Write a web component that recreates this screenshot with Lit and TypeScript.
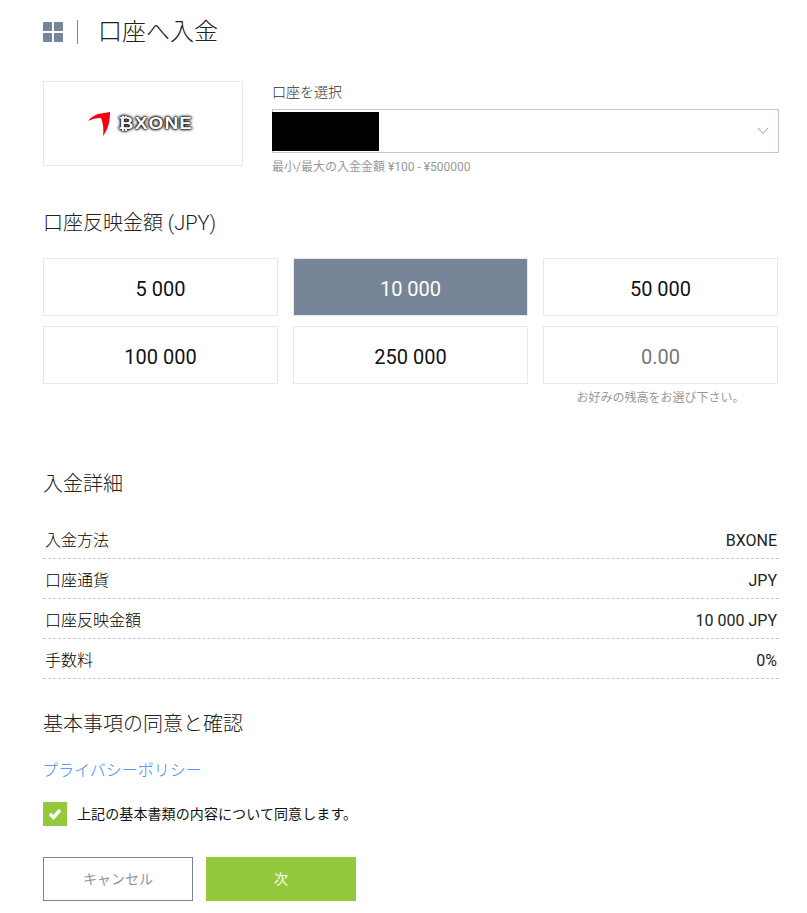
import { LitElement, html, css } from 'lit';
import { customElement } from 'lit/decorators.js';

const AMOUNTS = ['5 000', '10 000', '50 000', '100 000', '250 000'];
const DETAILS = [
  ['入金方法', 'BXONE'],
  ['口座通貨', 'JPY'],
  ['口座反映金額', '10 000 JPY'],
  ['手数料', '0%'],
];

@customElement('app-root')
export class AppRoot extends LitElement {
  static styles = css`
    :host {
      display: block;
      width: 807px;
      height: 913px;
      box-sizing: border-box;
      padding: 0 28px 0 43px;
      background: #fff;
      color: #222;
      font-family: Roboto, "Noto Sans CJK JP", sans-serif;
      font-weight: 300;
      overflow: hidden;
    }
    .title {
      display: flex;
      align-items: center;
      height: 64px;
    }
    .title h1 {
      margin: 0;
      font-size: 24px;
      font-weight: 300;
      line-height: 30px;
    }
    .grid-icon {
      display: block;
      width: 20px;
      height: 20px;
    }
    .divider {
      width: 1px;
      height: 24px;
      background: #76859a;
      margin: 0 20px 0 14px;
    }
    .account {
      display: flex;
      margin-top: 17px;
    }
    .logo {
      box-sizing: border-box;
      width: 200px;
      height: 85px;
      border: 1px solid #e8e8e8;
      display: flex;
      align-items: center;
      justify-content: center;
      gap: 7px;
    }
    .logo-text {
      display: inline-block;
      font-family: "Liberation Sans", sans-serif;
      font-weight: 700;
      font-size: 17px;
      letter-spacing: 1px;
      color: #fff;
      text-shadow: 0 0 1px #000, 0 0 2px #000, 0 0 3px #000, 0 0 3px #000;
      transform: scaleX(1.12);
      transform-origin: left center;
      margin-right: 13px;
    }
    .picker {
      width: 507px;
      margin-left: 29px;
    }
    .picker label {
      display: block;
      font-size: 14px;
      line-height: 20px;
      margin-top: 1px;
      color: #333;
      font-weight: 300;
    }
    .select {
      box-sizing: border-box;
      height: 44px;
      margin-top: 7px;
      border: 1px solid #bfc9d6;
      display: flex;
      align-items: center;
      justify-content: space-between;
      padding-right: 9px;
    }
    .redacted {
      width: 107px;
      height: 39px;
      margin-left: -1px;
      background: #000;
    }
    .hint {
      font-size: 12px;
      line-height: 16px;
      margin-top: 6px;
      color: #999;
      font-weight: 400;
    }
    h2 {
      margin: 0;
      font-size: 20px;
      font-weight: 300;
      line-height: 24px;
    }
    .amount-title {
      margin-top: 36px;
    }
    .amounts {
      display: grid;
      grid-template-columns: repeat(3, 235px);
      grid-auto-rows: 58px;
      column-gap: 15px;
      row-gap: 10px;
      margin-top: 23px;
    }
    .amount {
      box-sizing: border-box;
      border: 1px solid #e8e8e8;
      display: flex;
      align-items: center;
      justify-content: center;
      padding-top: 4px;
      font-size: 20px;
      font-weight: 400;
      color: #111;
    }
    .amount.active {
      background: #768597;
      color: #fff;
    }
    .amount.custom {
      color: #777;
    }
    .custom-note {
      width: 235px;
      margin: 6px 1px 0 auto;
      text-align: center;
      font-size: 12px;
      line-height: 16px;
      color: #999;
      font-weight: 400;
    }
    .details-title {
      margin-top: 66px;
    }
    .details {
      margin-top: 23px;
      width: 736px;
    }
    .row {
      box-sizing: border-box;
      height: 40px;
      display: flex;
      align-items: baseline;
      justify-content: space-between;
      padding: 3px 2px 0;
      line-height: 37px;
      border-bottom: 1px dashed #c8c8c8;
      font-size: 16px;
      font-weight: 300;
      color: #000;
    }
    .row .value {
      font-weight: 400;
      color: #222;
    }
    .agree-title {
      margin-top: 33px;
    }
    .policy {
      display: block;
      margin: 23px 0 0 -1px;
      font-size: 16px;
      line-height: 24px;
      color: #4289e6;
      text-decoration: none;
      font-weight: 300;
    }
    .check {
      display: flex;
      align-items: center;
      margin-top: 19px;
      font-size: 14px;
      font-weight: 400;
      letter-spacing: 0.1px;
      color: #111;
    }
    .check-label {
      padding-bottom: 3px;
    }
    .box {
      width: 24px;
      height: 24px;
      background: #95c93d;
      margin-right: 10px;
      display: flex;
      align-items: center;
      justify-content: center;
    }
    .buttons {
      display: flex;
      gap: 13px;
      margin-top: 31px;
    }
    .btn {
      box-sizing: border-box;
      width: 150px;
      height: 44px;
      display: flex;
      align-items: center;
      justify-content: center;
      padding-bottom: 3px;
      font-size: 14px;
      font-weight: 400;
    }
    .cancel {
      border: 1px solid #76859a;
      color: #8a96a6;
    }
    .next {
      background: #95c93d;
      color: #fff;
    }
  `;

  render() {
    return html`
      <div class="title">
        <svg class="grid-icon" viewBox="0 0 20 20" fill="#76859a">
          <rect x="0" y="0" width="9" height="9" rx="0.5"></rect>
          <rect x="11" y="0" width="9" height="9" rx="0.5"></rect>
          <rect x="0" y="11" width="9" height="9" rx="0.5"></rect>
          <rect x="11" y="11" width="9" height="9" rx="0.5"></rect>
        </svg>
        <span class="divider"></span>
        <h1>口座へ入金</h1>
      </div>

      <div class="account">
        <div class="logo">
          <svg width="23" height="25" viewBox="0 0 23 25">
            <path d="M0 10 C3 6 7 4 10 3 L22 1 C22 9 21 17 15 25 C16 19 15 12 13 7 C8 7 4 8 0 10 Z" fill="#f5000f"></path>
          </svg>
          <span class="logo-text">₿XONE</span>
        </div>
        <div class="picker">
          <label>口座を選択</label>
          <div class="select">
            <div class="redacted"></div>
            <svg width="12" height="8" viewBox="0 0 12 8" fill="none" stroke="#999" stroke-width="1">
              <path d="M1 1 L6 6.5 L11 1"></path>
            </svg>
          </div>
          <div class="hint">最小/最大の入金金額 ¥100 - ¥500000</div>
        </div>
      </div>

      <h2 class="amount-title">口座反映金額 (JPY)</h2>
      <div class="amounts">
        ${AMOUNTS.map(
          (a) => html`<div class="amount ${a === '10 000' ? 'active' : ''}">${a}</div>`
        )}
        <div class="amount custom">0.00</div>
      </div>
      <div class="custom-note">お好みの残高をお選び下さい。</div>

      <h2 class="details-title">入金詳細</h2>
      <div class="details">
        ${DETAILS.map(
          ([k, v]) => html`<div class="row"><span>${k}</span><span class="value">${v}</span></div>`
        )}
      </div>

      <h2 class="agree-title">基本事項の同意と確認</h2>
      <a class="policy" href="#">プライバシーポリシー</a>
      <div class="check">
        <span class="box">
          <svg width="14" height="12" viewBox="0 0 14 12" fill="none" stroke="#fff" stroke-width="3.5">
            <path d="M2 6 L5.5 9.5 L12 2"></path>
          </svg>
        </span>
        <span class="check-label">上記の基本書類の内容について同意します。</span>
      </div>
      <div class="buttons">
        <div class="btn cancel">キャンセル</div>
        <div class="btn next">次</div>
      </div>
    `;
  }
}
